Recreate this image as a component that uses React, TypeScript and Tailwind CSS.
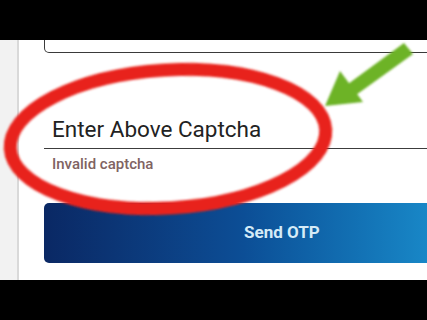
export default function App() {
  return (
    <div className="w-[427px] h-[320px] flex flex-col bg-black overflow-hidden" style={{ fontFamily: "Roboto, 'Noto Sans', sans-serif" }}>
      <div className="h-[40px] bg-black" />
      <div className="relative h-[240px] flex bg-white overflow-hidden">
        <div className="w-[19px] bg-[#f2f2f2] border-r-2 border-[#d9d9d9]" />
        <div className="flex-1 flex flex-col pl-[25px]">
          <div className="h-[13px] border-x-[1.5px] border-b-[1.5px] border-[#3a3a3a] rounded-b-[5px] -mr-4" />
          <div className="mt-[62px] pl-[8px] border-b-[1.5px] border-[#3c3c3c] pb-[4px]">
            <div className="text-[22.5px] leading-[29px] text-[#222]">Enter Above Captcha</div>
          </div>
          <div className="mt-[6px] pl-[8px] text-[15px] leading-[18px] font-medium text-[#7f6362]">Invalid captcha</div>
          <div className="mt-[30px] h-[60px] -mr-4 rounded-[5px] bg-gradient-to-r from-[#0a2864] via-[#0c4e96] to-[#1a8ccb] flex items-center pl-[200px]">
            <span className="text-[17px] font-bold text-[#d5ebf7]">Send OTP</span>
          </div>
        </div>
        <svg className="absolute left-0 top-0" width="427" height="240" viewBox="0 40 427 240">
          <defs>
            <filter id="soft" x="-10%" y="-10%" width="120%" height="120%">
              <feGaussianBlur stdDeviation="0.8" />
            </filter>
          </defs>
          <ellipse cx="168" cy="139" rx="158" ry="69" fill="none" stroke="#e8231b" strokeWidth="13" transform="rotate(-3.5 168 139)" filter="url(#soft)" />
          <g filter="url(#soft)" fill="#6db325">
            <path d="M404 43 L413 54 L356 95 L348 84 Z" />
            <path d="M325 106 L340 71 L363 102 Z" />
          </g>
        </svg>
      </div>
      <div className="h-[40px] bg-black" />
    </div>
  );
}
